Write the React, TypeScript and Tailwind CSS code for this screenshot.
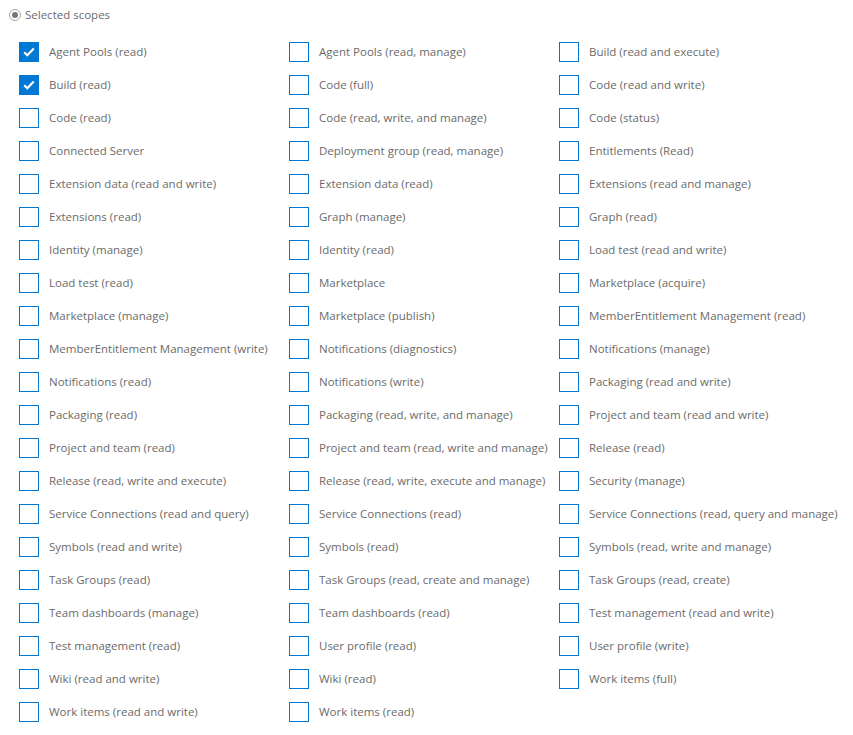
import React from 'react';

const scopes: { label: string; checked?: boolean }[] = [
  { label: 'Agent Pools (read)', checked: true },
  { label: 'Agent Pools (read, manage)' },
  { label: 'Build (read and execute)' },
  { label: 'Build (read)', checked: true },
  { label: 'Code (full)' },
  { label: 'Code (read and write)' },
  { label: 'Code (read)' },
  { label: 'Code (read, write, and manage)' },
  { label: 'Code (status)' },
  { label: 'Connected Server' },
  { label: 'Deployment group (read, manage)' },
  { label: 'Entitlements (Read)' },
  { label: 'Extension data (read and write)' },
  { label: 'Extension data (read)' },
  { label: 'Extensions (read and manage)' },
  { label: 'Extensions (read)' },
  { label: 'Graph (manage)' },
  { label: 'Graph (read)' },
  { label: 'Identity (manage)' },
  { label: 'Identity (read)' },
  { label: 'Load test (read and write)' },
  { label: 'Load test (read)' },
  { label: 'Marketplace' },
  { label: 'Marketplace (acquire)' },
  { label: 'Marketplace (manage)' },
  { label: 'Marketplace (publish)' },
  { label: 'MemberEntitlement Management (read)' },
  { label: 'MemberEntitlement Management (write)' },
  { label: 'Notifications (diagnostics)' },
  { label: 'Notifications (manage)' },
  { label: 'Notifications (read)' },
  { label: 'Notifications (write)' },
  { label: 'Packaging (read and write)' },
  { label: 'Packaging (read)' },
  { label: 'Packaging (read, write, and manage)' },
  { label: 'Project and team (read and write)' },
  { label: 'Project and team (read)' },
  { label: 'Project and team (read, write and manage)' },
  { label: 'Release (read)' },
  { label: 'Release (read, write and execute)' },
  { label: 'Release (read, write, execute and manage)' },
  { label: 'Security (manage)' },
  { label: 'Service Connections (read and query)' },
  { label: 'Service Connections (read)' },
  { label: 'Service Connections (read, query and manage)' },
  { label: 'Symbols (read and write)' },
  { label: 'Symbols (read)' },
  { label: 'Symbols (read, write and manage)' },
  { label: 'Task Groups (read)' },
  { label: 'Task Groups (read, create and manage)' },
  { label: 'Task Groups (read, create)' },
  { label: 'Team dashboards (manage)' },
  { label: 'Team dashboards (read)' },
  { label: 'Test management (read and write)' },
  { label: 'Test management (read)' },
  { label: 'User profile (read)' },
  { label: 'User profile (write)' },
  { label: 'Wiki (read and write)' },
  { label: 'Wiki (read)' },
  { label: 'Work items (full)' },
  { label: 'Work items (read and write)' },
  { label: 'Work items (read)' },
];

const Checkbox: React.FC<{ checked?: boolean }> = ({ checked }) => (
  <span
    className={`shrink-0 w-5 h-5 flex items-center justify-center border border-[#0078d4] ${
      checked ? 'bg-[#0078d4]' : 'bg-white'
    }`}
  >
    {checked && (
      <svg width="12" height="10" viewBox="0 0 12 10" fill="none">
        <path d="M1.2 5.2 L4.3 8.2 L10.8 1.6" stroke="white" strokeWidth="2.2" />
      </svg>
    )}
  </span>
);

export default function App() {
  return (
    <div className="min-h-screen w-[853px] bg-white text-[11.5px] text-[#6b6b6b] font-['Open_Sans',sans-serif]">
      <div className="flex items-center gap-[4px] pl-[9px] pt-[4px] h-[26px]">
        <span className="w-3 h-3 rounded-full border border-[#a6a6a6] flex items-center justify-center">
          <span className="w-[6px] h-[6px] rounded-full bg-[#767676]" />
        </span>
        <span>Selected scopes</span>
      </div>

      <div className="grid grid-cols-[270px_270px_270px] pl-[19px] pt-[9px]">
        {scopes.map((s) => (
          <label key={s.label} className="flex items-center gap-[10px] h-[33px] cursor-pointer">
            <Checkbox checked={s.checked} />
            <span className="whitespace-nowrap">{s.label}</span>
          </label>
        ))}
      </div>
    </div>
  );
}
